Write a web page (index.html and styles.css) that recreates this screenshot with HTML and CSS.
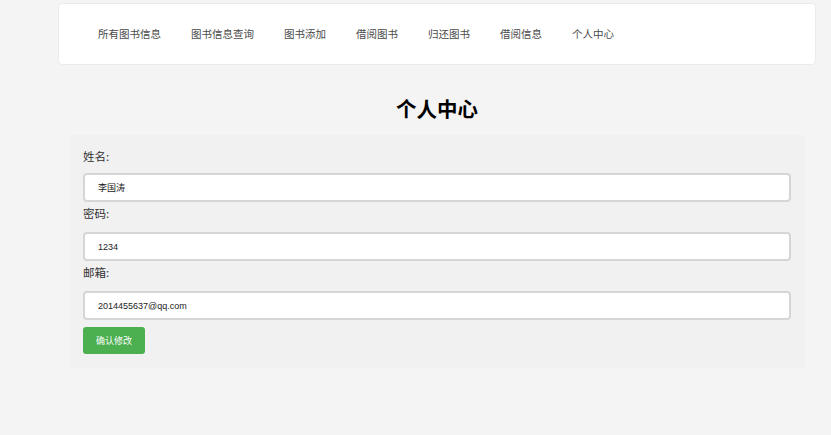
FILE: index.html
```html
<!DOCTYPE html>
<html lang="zh-CN">
<head>
<meta charset="utf-8">
<title>个人中心</title>
<link rel="stylesheet" href="styles.css">
</head>
<body>
<div class="page">
  <nav class="nav">
    <ul class="nav-list">
      <li><a class="nav-link" href="#">所有图书信息</a></li>
      <li><a class="nav-link" href="#">图书信息查询</a></li>
      <li><a class="nav-link" href="#">图书添加</a></li>
      <li><a class="nav-link" href="#">借阅图书</a></li>
      <li><a class="nav-link" href="#">归还图书</a></li>
      <li><a class="nav-link" href="#">借阅信息</a></li>
      <li><a class="nav-link" href="#">个人中心</a></li>
    </ul>
  </nav>
  <h1 class="title">个人中心</h1>
  <form class="panel">
    <label class="label label-first" for="name">姓名:</label>
    <input class="field" id="name" type="text" value="李国涛">
    <label class="label" for="pwd">密码:</label>
    <input class="field" id="pwd" type="text" value="1234">
    <label class="label" for="mail">邮箱:</label>
    <input class="field" id="mail" type="text" value="2014455637@qq.com">
    <button class="btn" type="button">确认修改</button>
  </form>
</div>
</body>
</html>
```
FILE: styles.css
```css
* { box-sizing: border-box; }
html, body {
  margin: 0;
  padding: 0;
  background: #f4f4f4;
  font-family: "Noto Sans CJK SC", "Liberation Sans", sans-serif;
}
.page {
  margin: 3px 15px 0 58px;
  display: flex;
  flex-direction: column;
}
.nav {
  height: 62px;
  background: #fff;
  border: 1px solid #ebebeb;
  border-radius: 4px;
  display: flex;
  align-items: center;
}
.nav-list {
  list-style: none;
  margin: 0;
  padding: 0 0 0 39px;
  display: flex;
  gap: 30px;
}
.nav-link {
  font-size: 10.5px;
  line-height: 14px;
  color: #4a4a4a;
  text-decoration: none;
  display: block;
}
.title {
  margin: 31px 0 15px;
  font-size: 20.5px;
  line-height: 24px;
  font-weight: 700;
  text-align: center;
  color: #000;
}
.panel {
  margin: 0 11px 0 12px;
  background: #f1f1f1;
  border-radius: 2px;
  padding: 12px 14px 14px 13px;
  display: flex;
  flex-direction: column;
  align-items: flex-start;
}
.label {
  font-size: 11.5px;
  line-height: 18px;
  color: #333;
  margin-bottom: 10px;
}
.label-first {
  margin-bottom: 8px;
}
.field {
  width: 100%;
  height: 29px;
  margin: 0 0 2px;
  padding: 0 13px;
  border: 2px solid #d6d6d6;
  border-radius: 4px;
  background: #fff;
  font-family: "Liberation Sans", "Noto Sans CJK SC", sans-serif;
  font-size: 9px;
  color: #222;
  outline: none;
}
.btn {
  margin-top: 5px;
  width: 62px;
  height: 27px;
  border: none;
  border-radius: 3px;
  background: #4caf50;
  color: #fff;
  font-family: "Noto Sans CJK SC", sans-serif;
  font-size: 9px;
  padding: 0;
}
```
